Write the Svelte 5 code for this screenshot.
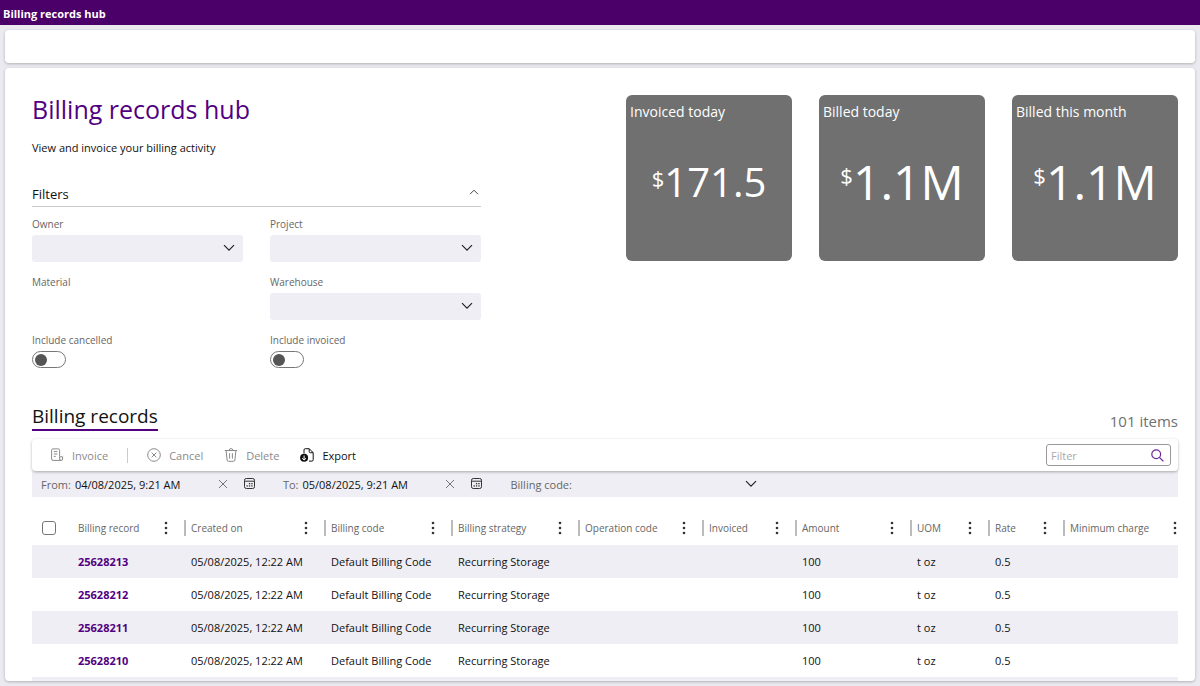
<script lang="ts">
  let ownerId = '';
  let projectId = '';
  let warehouseId = '';
  let billingCode = '';
  let includeCancelled = false;
  let includeInvoiced = false;
  let filtersOpen = true;
  let from = '04/08/2025, 9:21 AM';
  let to = '05/08/2025, 9:21 AM';
  let search = '';

  const tiles = [
    { title: 'Invoiced today', value: '171.5', size: 'medium' },
    { title: 'Billed today', value: '1.1M', size: 'large' },
    { title: 'Billed this month', value: '1.1M', size: 'large' },
  ];

  /* width is a share of the whole table */
  const columns = [
    { key: 'id', label: 'Billing record', width: 113 },
    { key: 'created', label: 'Created on', width: 140 },
    { key: 'code', label: 'Billing code', width: 127 },
    { key: 'strategy', label: 'Billing strategy', width: 127 },
    { key: 'operation', label: 'Operation code', width: 124 },
    { key: 'invoiced', label: 'Invoiced', width: 93 },
    { key: 'amount', label: 'Amount', width: 115 },
    { key: 'uom', label: 'UOM', width: 78 },
    { key: 'rate', label: 'Rate', width: 75 },
    { key: 'minimum', label: 'Minimum charge', width: 115 },
  ];
  const checkWidth = 39;
  const totalWidth = columns.reduce((sum, c) => sum + c.width, checkWidth);

  const records: Record<string, string>[] = ['25628213', '25628212', '25628211', '25628210'].map((id) => ({
    id,
    created: '05/08/2025, 12:22 AM',
    code: 'Default Billing Code',
    strategy: 'Recurring Storage',
    amount: '100',
    uom: 't oz',
    rate: '0.5',
  }));
</script>

{#snippet chevron()}
  <svg class="chevron" viewBox="0 0 12 8" width="12" height="8" aria-hidden="true">
    <path d="M1 1.2 L6 6.2 L11 1.2" />
  </svg>
{/snippet}

{#snippet clearIcon()}
  <svg viewBox="0 0 10 10" width="10" height="10" aria-hidden="true">
    <path d="M1 1 L9 9 M9 1 L1 9" stroke="#777" />
  </svg>
{/snippet}

{#snippet calendarIcon()}
  <svg viewBox="0 0 12 12" width="12" height="12" aria-hidden="true">
    <rect x="0.5" y="0.5" width="10" height="10" rx="1.8" stroke="#333" />
    <path d="M0.5 3.2 H10.5" stroke="#333" />
    <g fill="#333" stroke="none">
      <rect x="4.9" y="5" width="1.3" height="1.3" />
      <rect x="7.3" y="5" width="1.3" height="1.3" />
      <rect x="2.5" y="7.3" width="1.3" height="1.3" />
      <rect x="4.9" y="7.3" width="1.3" height="1.3" />
      <rect x="7.3" y="7.3" width="1.3" height="1.3" />
    </g>
  </svg>
{/snippet}

<div class="app">
  <header class="topbar">Billing records hub</header>
  <div class="card strip"></div>

  <main class="card page">
    <section class="top">
      <div class="intro">
        <h1>Billing records hub</h1>
        <p class="lead">View and invoice your billing activity</p>

        <div class="filters-head">
          <h2>Filters</h2>
          <button class="icon" aria-label="Toggle filters" aria-expanded={filtersOpen} on:click={() => (filtersOpen = !filtersOpen)}>
            <svg viewBox="0 0 10 6" width="10" height="6" aria-hidden="true">
              <path d="M1 5.2 L5 1.2 L9 5.2" stroke="#444" />
            </svg>
          </button>
        </div>

        {#if filtersOpen}
          <div class="filters">
            <div class="field">
              <label for="owner">Owner</label>
              <div class="select">
                <select id="owner" bind:value={ownerId}><option value=""></option></select>
                {@render chevron()}
              </div>
            </div>
            <div class="field">
              <label for="project">Project</label>
              <div class="select">
                <select id="project" bind:value={projectId}><option value=""></option></select>
                {@render chevron()}
              </div>
            </div>
            <div class="field">
              <span class="label">Material</span>
            </div>
            <div class="field">
              <label for="warehouse">Warehouse</label>
              <div class="select">
                <select id="warehouse" bind:value={warehouseId}><option value=""></option></select>
                {@render chevron()}
              </div>
            </div>
            <div class="field">
              <label for="cancelled">Include cancelled</label>
              <input id="cancelled" class="toggle" type="checkbox" role="switch" bind:checked={includeCancelled} />
            </div>
            <div class="field">
              <label for="invoiced">Include invoiced</label>
              <input id="invoiced" class="toggle" type="checkbox" role="switch" bind:checked={includeInvoiced} />
            </div>
          </div>
        {/if}
      </div>

      <div class="tiles">
        {#each tiles as tile}
          <article class="tile">
            <h3>{tile.title}</h3>
            <p class="value {tile.size}"><span class="currency">$</span>{tile.value}</p>
          </article>
        {/each}
      </div>
    </section>

    <div class="section-head">
      <h2>Billing records</h2>
      <span class="count">101 items</span>
    </div>

    <div class="toolbar">
      <button class="action" disabled>
        <svg viewBox="0 0 14 14" width="14" height="14" aria-hidden="true">
          <path d="M9.6 8.6 V2.2 Q9.6 0.9 8.3 0.9 H2.9 Q1.6 0.9 1.6 2.2 V11 Q1.6 12.4 3 12.4 H11.2 Q12.6 12.4 12.6 11 V8.8 H9.6 V11 Q9.6 12.4 11.2 12.4" />
          <path d="M3.8 3.6 H7.4 M3.8 6 H7.4 M3.8 8.4 H5.8" />
        </svg>
        <span>Invoice</span>
      </button>
      <span class="divider"></span>
      <button class="action" disabled>
        <svg viewBox="0 0 14 14" width="14" height="14" aria-hidden="true">
          <circle cx="7" cy="7" r="6.3" />
          <path d="M4.7 4.7 L9.3 9.3 M9.3 4.7 L4.7 9.3" />
        </svg>
        <span>Cancel</span>
      </button>
      <button class="action" disabled>
        <svg viewBox="0 0 14 14" width="14" height="14" aria-hidden="true">
          <path d="M0.8 2.5 H13.2 M5.2 2.3 Q5.2 0.6 7 0.6 Q8.8 0.6 8.8 2.3 M2.1 2.7 L3.1 12 Q3.2 13.3 4.5 13.3 H9.5 Q10.8 13.3 10.9 12 L11.9 2.7 M5.6 5.2 V10.6 M8.4 5.2 V10.6" />
        </svg>
        <span>Delete</span>
      </button>
      <button class="action">
        <svg viewBox="0 0 14 14" width="14" height="14" aria-hidden="true">
          <path d="M4 5.4 V2 Q4 0.7 5.3 0.7 H9.2 L13.2 4.7 V11.8 Q13.2 13.1 11.9 13.1 H9 M9.2 0.8 V3.6 Q9.2 4.7 10.3 4.7 H13" />
          <circle cx="4.1" cy="9.8" r="4" fill="#111" stroke="none" />
          <path d="M4.1 7.5 V12 M2.2 10.2 L4.1 12 L6 10.2" stroke="#fff" />
        </svg>
        <span>Export</span>
      </button>
      <div class="search">
        <input type="search" placeholder="Filter" aria-label="Filter" bind:value={search} />
        <button class="icon" aria-label="Search">
          <svg viewBox="0 0 13 13" width="13" height="13" aria-hidden="true">
            <circle cx="5.2" cy="5.2" r="4.4" stroke="#6b2a95" stroke-width="1.2" />
            <path d="M8.4 8.4 L12.4 12.4" stroke="#6b2a95" stroke-width="1.3" />
          </svg>
        </button>
      </div>
    </div>

    <div class="query">
      <div class="date">
        <label for="from">From:</label>
        <input id="from" type="text" bind:value={from} />
        <button class="icon" aria-label="Clear from date" on:click={() => (from = '')}>{@render clearIcon()}</button>
        <button class="icon" aria-label="Pick from date">{@render calendarIcon()}</button>
      </div>
      <div class="date">
        <label for="to">To:</label>
        <input id="to" type="text" bind:value={to} />
        <button class="icon" aria-label="Clear to date" on:click={() => (to = '')}>{@render clearIcon()}</button>
        <button class="icon" aria-label="Pick to date">{@render calendarIcon()}</button>
      </div>
      <div class="code">
        <label for="code">Billing code:</label>
        <div class="select">
          <select id="code" bind:value={billingCode}><option value=""></option></select>
          {@render chevron()}
        </div>
      </div>
    </div>

    <table>
      <colgroup>
        <col style="width: {(checkWidth / totalWidth) * 100}%" />
        {#each columns as col}
          <col style="width: {(col.width / totalWidth) * 100}%" />
        {/each}
      </colgroup>
      <thead>
        <tr>
          <th class="check"><input type="checkbox" aria-label="Select all" /></th>
          {#each columns as col}
            <th>
              <div class="head">
                <span>{col.label}</span>
                <button class="icon kebab" aria-label="{col.label} options">
                  <svg viewBox="0 0 4 14" width="4" height="14" aria-hidden="true">
                    <g fill="#333" stroke="none">
                      <circle cx="2" cy="2" r="1.3" />
                      <circle cx="2" cy="7" r="1.3" />
                      <circle cx="2" cy="12" r="1.3" />
                    </g>
                  </svg>
                </button>
              </div>
            </th>
          {/each}
        </tr>
      </thead>
      <tbody>
        {#each records as record}
          <tr>
            <td></td>
            {#each columns as col}
              <td>
                {#if col.key === 'id'}
                  <a href="#{record.id}">{record.id}</a>
                {:else}
                  {record[col.key] ?? ''}
                {/if}
              </td>
            {/each}
          </tr>
        {/each}
        <tr><td colspan={columns.length + 1}></td></tr>
      </tbody>
    </table>
  </main>
</div>

<style>
  :global(body) {
    background: #ebeaf0;
  }

  .app {
    --purple: #520082;
    --fill: #efeef4;
    --muted: #666;
    display: flex;
    flex-direction: column;
    box-sizing: border-box;
    height: 100vh;
    padding-bottom: 5px;
    font-family: "Open Sans", "Noto Sans", sans-serif;
    font-size: 11px;
    line-height: 16px;
    color: #111;
  }

  .app :global(*) { box-sizing: border-box; }

  h1, h2, h3, p { margin: 0; font-weight: 400; }

  button, input, select { font: inherit; color: inherit; }

  svg { display: block; flex: none; fill: none; stroke: currentColor; }

  .topbar {
    flex: none;
    padding: 6px 3px 3px;
    background: #4b0069;
    color: #fff;
    font-weight: 700;
  }

  .card {
    margin: 5px 5px 0;
    background: #fff;
    border-radius: 4px;
    box-shadow: 0 1px 3px rgba(0, 0, 0, .25);
  }

  .strip { flex: none; height: 33px; }

  .page {
    flex: 1;
    min-height: 0;
    overflow: hidden;
    padding: 27px 17px 0 27px;
  }

  .top {
    display: flex;
    justify-content: space-between;
    align-items: flex-start;
    gap: 27px;
  }

  .intro { flex: 0 1 449px; }

  h1 {
    font-size: 25px;
    line-height: 28px;
    color: var(--purple);
  }

  .lead { margin-top: 16px; line-height: 18px; }

  .filters-head {
    display: flex;
    justify-content: space-between;
    margin-top: 25px;
    padding-right: 2px;
    border-bottom: 1px solid #ccc;
  }

  .filters-head h2 { font-size: 13px; line-height: 24px; }

  .filters-head .icon { padding-bottom: 4px; }

  .icon {
    display: flex;
    align-items: center;
    padding: 0;
    border: 0;
    background: none;
    cursor: pointer;
  }

  .filters {
    display: grid;
    grid-template-columns: 1fr 1fr;
    gap: 12px 27px;
    margin-top: 9px;
    font-size: 10px;
  }

  .field {
    display: flex;
    flex-direction: column;
    align-items: stretch;
    gap: 3px;
  }

  .field label, .label { color: var(--muted); }

  .select { position: relative; flex: 1; }

  .select select {
    display: block;
    width: 100%;
    height: 27px;
    padding: 0 24px 0 6px;
    border: 0;
    border-radius: 3px;
    background: var(--fill);
    appearance: none;
  }

  .chevron {
    position: absolute;
    top: 9px;
    right: 8px;
    pointer-events: none;
    stroke: #222;
    stroke-width: 1.2;
  }

  .toggle {
    display: flex;
    align-items: center;
    width: 34px;
    height: 17px;
    margin: 0;
    padding: 0 2px;
    border: 1px solid #777;
    border-radius: 9px;
    background: #fff;
    appearance: none;
  }

  .toggle::before {
    content: "";
    width: 12px;
    height: 12px;
    border-radius: 50%;
    background: #555;
  }

  .toggle:checked { justify-content: flex-end; }

  .tiles { display: flex; gap: 27px; }

  .tile {
    width: 166px;
    height: 166px;
    padding: 7px 4px;
    border-radius: 6px;
    background: #707070;
    color: #fff;
  }

  .tile h3 { font-size: 14px; line-height: 20px; }

  .value {
    display: flex;
    justify-content: center;
    margin-top: 30px;
    line-height: 60px;
  }

  .medium { font-size: 40px; }
  .large { font-size: 48px; }

  .currency { font-size: 22px; line-height: 46px; }
  .medium .currency { line-height: 52px; }

  .section-head {
    display: flex;
    justify-content: space-between;
    align-items: flex-end;
    margin-top: 35px;
    line-height: 26px;
  }

  .section-head h2 {
    border-bottom: 2px solid var(--purple);
    font-size: 19px;
  }

  .count { font-size: 15px; line-height: 20px; color: #707070; }

  .toolbar {
    position: relative;
    display: flex;
    align-items: center;
    height: 32px;
    margin-top: 8px;
    padding: 0 7px 0 18px;
    border-radius: 4px;
    background: #fff;
    box-shadow: 0 1px 3px rgba(0, 0, 0, .3);
  }

  .action {
    display: flex;
    align-items: center;
    gap: 8px;
    margin-right: 21px;
    padding: 0;
    border: 0;
    background: none;
    cursor: pointer;
  }

  .action span { padding-top: 2px; }

  .action:disabled { color: #8a8a8a; cursor: default; }

  .divider { width: 1px; height: 15px; margin: 0 19px 0 -2px; background: #ccc; }

  .search {
    display: flex;
    align-items: center;
    width: 125px;
    height: 22px;
    margin-left: auto;
    padding: 0 6px 0 4px;
    border: 1px solid #999;
    border-radius: 3px;
  }

  .search input {
    flex: 1;
    min-width: 0;
    padding: 2px 0 0;
    border: 0;
    outline: 0;
    background: none;
    appearance: none;
  }

  .search input::placeholder { color: #aaa; opacity: 1; }

  .query {
    display: flex;
    align-items: center;
    gap: 27px;
    height: 26px;
    padding: 0 9px;
    background: var(--fill);
  }

  .query label { padding-top: 2px; color: var(--muted); }

  .date { display: flex; align-items: center; }

  .date input {
    width: 143px;
    margin-left: 4px;
    padding: 2px 0 0;
    border: 0;
    background: none;
  }

  .date .icon + .icon { margin-left: 16px; }

  .code { display: flex; align-items: center; width: 255px; }

  .code select { height: 26px; border-radius: 0; background: none; }

  table {
    width: 100%;
    margin-top: 14px;
    border-collapse: collapse;
    table-layout: fixed;
  }

  th {
    height: 34px;
    padding: 0;
    font-size: 10px;
    font-weight: 400;
    text-align: left;
    color: var(--muted);
  }

  .head {
    display: flex;
    align-items: center;
    justify-content: space-between;
    height: 16px;
    padding: 0 1px 0 7px;
    white-space: nowrap;
  }

  th:not(:last-child) .head { padding-right: 16px; }

  th:nth-child(n + 3) .head {
    padding-left: 5px;
    border-left: 2px solid #bbb;
  }

  .check input {
    display: block;
    width: 14px;
    height: 14px;
    margin: 0 0 0 10px;
    border: 1px solid #777;
    border-radius: 3px;
    background: #fff;
    appearance: none;
  }

  td {
    height: 33px;
    padding: 0 0 0 7px;
    white-space: nowrap;
  }

  tbody tr:nth-child(odd) { background: var(--fill); }

  a { color: var(--purple); font-weight: 700; text-decoration: none; }
</style>
